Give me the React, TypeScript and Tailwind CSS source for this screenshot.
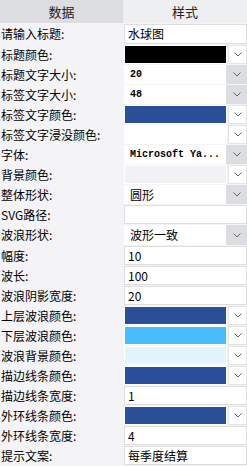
import React from "react";

type Row =
  | { label: string; kind: "input"; value: string; tall?: boolean }
  | { label: string; kind: "select"; value: string; mono?: boolean; tall?: boolean }
  | { label: string; kind: "color"; color: string; tall?: boolean };

const rows: Row[] = [
  { label: "请输入标题:", kind: "input", value: "水球图", tall: true },
  { label: "标题颜色:", kind: "color", color: "bg-[#000000]" },
  { label: "标题文字大小:", kind: "select", value: "20", mono: true },
  { label: "标签文字大小:", kind: "select", value: "48", mono: true },
  { label: "标签文字颜色:", kind: "color", color: "bg-[#2a4f98]" },
  { label: "标签文字浸没颜色:", kind: "color", color: "bg-white" },
  { label: "字体:", kind: "select", value: "Microsoft Ya...", mono: true },
  { label: "背景颜色:", kind: "color", color: "bg-[#f2f2f4]" },
  { label: "整体形状:", kind: "select", value: "圆形" },
  { label: "SVG路径:", kind: "input", value: "" },
  { label: "波浪形状:", kind: "select", value: "波形一致", tall: true },
  { label: "幅度:", kind: "input", value: "10" },
  { label: "波长:", kind: "input", value: "100" },
  { label: "波浪阴影宽度:", kind: "input", value: "20" },
  { label: "上层波浪颜色:", kind: "color", color: "bg-[#2a4f98]" },
  { label: "下层波浪颜色:", kind: "color", color: "bg-[#48bcfc]" },
  { label: "波浪背景颜色:", kind: "color", color: "bg-[#e2f5fd]" },
  { label: "描边线条颜色:", kind: "color", color: "bg-[#2a4f98]" },
  { label: "描边线条宽度:", kind: "input", value: "1" },
  { label: "外环线条颜色:", kind: "color", color: "bg-[#2a4f98]" },
  { label: "外环线条宽度:", kind: "input", value: "4" },
  { label: "提示文案:", kind: "input", value: "每季度结算" },
];

const Chevron = () => (
  <svg width="8" height="5" viewBox="0 0 8 5" fill="none">
    <path d="M0.5 0.5 L4 4 L7.5 0.5" stroke="#666" strokeWidth="1" />
  </svg>
);

const Field = ({ row }: { row: Row }) => {
  if (row.kind === "input") {
    return (
      <div className="flex items-center h-full w-[123px] bg-white border border-[#dedede] pl-[3px] text-[12px] text-black">
        {row.value}
      </div>
    );
  }
  if (row.kind === "color") {
    return (
      <div className="flex h-full w-[123px]">
        <div className={`h-full w-[103px] border border-white ${row.color}`} />
        <div className="flex items-center justify-center h-full w-[19px] ml-px bg-white border border-[#e4e4e4]">
          <Chevron />
        </div>
      </div>
    );
  }
  return (
    <div className="flex h-full w-[123px]">
      <div
        className={`flex items-center h-full w-[102px] bg-white pl-[6px] text-black whitespace-nowrap overflow-hidden ${
          row.mono ? "font-['Liberation_Mono',monospace] text-[10px] font-bold" : "text-[12px]"
        }`}
      >
        {row.value}
      </div>
      <div className="flex items-center justify-center h-full w-[21px] bg-[#dcdde0]">
        <Chevron />
      </div>
    </div>
  );
};

export default function App() {
  return (
    <div className="w-[247px] h-[466px] overflow-hidden bg-[#f4f4f6] font-['Noto_Sans_CJK_SC','Liberation_Sans',sans-serif] text-black">
      <div className="flex h-[23px] text-[13px] text-[#222]">
        <div className="flex items-center justify-center w-[123px] bg-[#dcdde0]">数据</div>
        <div className="flex items-center justify-center flex-1 bg-[#eeeff1]">样式</div>
      </div>
      <div className="flex flex-col gap-px mt-px">
        {rows.map((row) => (
          <div key={row.label} className={`flex items-center ${row.tall ? "h-[20px]" : "h-[19px]"}`}>
            <div className="w-[124px] pl-px text-[12px] whitespace-nowrap leading-none">{row.label}</div>
            <Field row={row} />
          </div>
        ))}
      </div>
    </div>
  );
}
